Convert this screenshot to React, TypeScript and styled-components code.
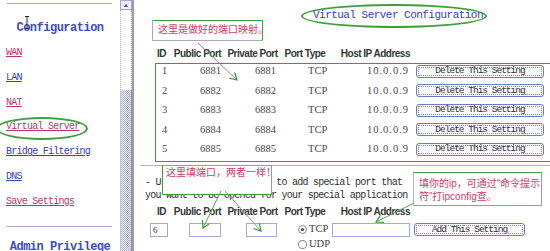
import React from 'react'
import styled, { createGlobalStyle } from 'styled-components'

const mono = `"Liberation Mono", "DejaVu Sans Mono", monospace`
const serif = `"Liberation Serif", "DejaVu Serif", serif`
const sans = `"Liberation Sans", Arial, sans-serif`
const cjk = `"Liberation Sans", "Noto Sans CJK SC", sans-serif`

const GlobalStyle = createGlobalStyle`
  html, body {
    margin: 0;
    padding: 0;
    background: #fff;
    overflow: hidden;
  }
`

const menu = [
  { label: 'WAN', visited: true },
  { label: 'LAN' },
  { label: 'NAT', visited: true },
  { label: 'Virtual Server', visited: true },
  { label: 'Bridge Filtering' },
  { label: 'DNS' },
  { label: 'Save Settings', visited: true },
]

const mappings = [1, 2, 3, 4, 5].map(i => ({
  id: i,
  publicPort: 6880 + i,
  privatePort: 6880 + i,
  type: 'TCP',
  host: '10.0.0.9',
}))

const Page = styled.div`
  position: relative;
  width: 550px;
  height: 251px;
  display: flex;
  overflow: hidden;
  background: #fff;
`

/* left frame */
const Sidebar = styled.nav`
  width: 120px;
  flex: none;
  display: flex;
  flex-direction: column;
`

const Rule = styled.div<{ $top: number; $left: number; $right: number }>`
  margin: ${p => p.$top}px ${p => p.$right}px 0 ${p => p.$left}px;
  border-top: 1px solid #a6a6c6;
`

const SideHeading = styled.div<{ $top: number }>`
  margin-top: ${p => p.$top}px;
  text-align: center;
  font: bold 12px/14px ${mono};
  letter-spacing: -0.5px;
  color: #3b4cc0;
  white-space: nowrap;
`

const Menu = styled.ul`
  list-style: none;
  margin: 12px 0 0;
  padding: 0 0 0 6px;
  display: flex;
  flex-direction: column;
  gap: 12.8px;
`

const MenuLink = styled.a<{ $visited?: boolean }>`
  display: block;
  height: 12px;
  font: 10px/12px ${mono};
  letter-spacing: -0.75px;
  color: ${p => (p.$visited ? '#b6386a' : '#3444a8')};
  text-decoration: underline;
  white-space: nowrap;
`

const Scrollbar = styled.div`
  width: 12px;
  flex: none;
  display: flex;
  flex-direction: column;
`

const ScrollArrow = styled.div`
  height: 10px;
  box-sizing: border-box;
  border: 1px solid #a8a8d8;
  background: #eeeefa;
  display: flex;
  align-items: center;
  justify-content: center;

  &::after {
    content: '';
    border-left: 2px solid transparent;
    border-right: 2px solid transparent;
    border-bottom: 3px solid #4050a0;
  }
`

const ScrollTrack = styled.div`
  height: 80px;
  border-left: 1px dotted #b4b4dc;
  border-right: 1px dotted #9c9cc8;
`

const ScrollThumb = styled.div`
  flex: 1;
  border-left: 1px solid #c4c4e8;
  border-right: 1px solid #8c8cc4;
  background: repeating-conic-gradient(#a4a4d4 0 25%, #fff 0 50%) 0 0 / 2px 2px;
`

const Divider = styled.div`
  width: 2px;
  flex: none;
  margin-right: 1px;
  background: #a49c9c;
`

/* right frame */
const Main = styled.main`
  flex: 1;
  display: flex;
  flex-direction: column;
`

const Title = styled.h1`
  margin: 0;
  height: 47px;
  box-sizing: border-box;
  padding: 9px 0 0 178px;
  font: normal 11px/12px ${mono};
  letter-spacing: -0.53px;
  color: #3040c0;
  white-space: nowrap;
`

const Grid = styled.div`
  display: grid;
  grid-template-columns: 20px 55px 55px 50px 82px 1fr;
  align-items: start;
  margin-left: 15px;
`

const HeadCell = styled.div<{ $align?: string; $pad?: string }>`
  height: 16px;
  padding: ${p => p.$pad || '0'};
  text-align: ${p => p.$align || 'center'};
  font: bold 10px/16px ${sans};
  letter-spacing: -0.5px;
  color: #363636;
  white-space: nowrap;
`

const Cell = styled.div<{ $pl?: number; $right?: boolean }>`
  height: 19.5px;
  display: flex;
  align-items: center;
  justify-content: ${p => (p.$right ? 'flex-end' : 'flex-start')};
  padding-left: ${p => p.$pl || 0}px;
  padding-right: ${p => (p.$right ? 3 : 0)}px;
  font: 10.5px/1 ${serif};
  color: #4a4a4a;
  white-space: nowrap;
`

const Address = styled.span`
  letter-spacing: 1px;
`

const SettingButton = styled.button<{ $w: number; $ml: number }>`
  width: ${p => p.$w}px;
  height: 13px;
  margin-left: ${p => p.$ml}px;
  padding: 0;
  box-sizing: border-box;
  border: 1px solid #6c7cc4;
  border-radius: 3px;
  background: #fbfbff;
  outline: 1px dotted #8a8a8a;
  outline-offset: -3px;
  font: 9.5px/10px ${mono};
  letter-spacing: -1px;
  color: #303030;
`

const SectionRule = styled.div`
  margin: 6px 0 0 5px;
  border-top: 1px solid #b0b0cc;
`

const Help = styled.p`
  margin: 9.5px 0 0;
  padding-left: 10px;
  font: 10px/13px ${mono};
  letter-spacing: -0.75px;
  color: #303030;
  white-space: pre;
`

const AddHead = styled(Grid)`
  margin-top: 3.5px;

  & > div {
    height: 14px;
    line-height: 14px;
  }
`

const AddRow = styled(Grid)`
  margin-top: 4px;
`

const Field = styled.input<{ $w: number; $ml: number }>`
  width: ${p => p.$w}px;
  height: 14px;
  margin: 0 0 0 ${p => p.$ml}px;
  padding: 0 2px;
  box-sizing: border-box;
  border: 1px solid #a6aad0;
  background: #fff;
  font: 9px/12px ${serif};
  color: #333;
  outline: none;
`

const RadioGroup = styled.div`
  display: flex;
  flex-direction: column;
  gap: 2px;
  padding-left: 18px;
`

const RadioLabel = styled.label`
  display: flex;
  align-items: center;
  height: 13px;
  gap: 2px;
  font: 10.5px/1 ${serif};
  color: #404040;
`

const RadioDot = styled.span<{ $on?: boolean }>`
  width: 9px;
  height: 9px;
  box-sizing: border-box;
  border-radius: 50%;
  border: 1px solid #8088a8;
  background: #fff;
  display: flex;
  align-items: center;
  justify-content: center;

  &::after {
    content: '';
    width: 3px;
    height: 3px;
    border-radius: 50%;
    background: ${p => (p.$on ? '#3c4a3c' : 'transparent')};
  }
`

/* annotations drawn over the screenshot */
const Ellipse = styled.div<{ $x: number; $y: number; $w: number; $h: number }>`
  position: absolute;
  left: ${p => p.$x}px;
  top: ${p => p.$y}px;
  width: ${p => p.$w}px;
  height: ${p => p.$h}px;
  box-sizing: border-box;
  border: 2px solid #3f9f3f;
  border-radius: 50%;
  pointer-events: none;
`

const Frame = styled.div`
  position: absolute;
  left: 155px;
  top: 63px;
  width: 400px;
  height: 99px;
  box-sizing: border-box;
  border: 1.5px solid #3c9c3c;
  pointer-events: none;
`

const Note = styled.div<{ $x: number; $y: number; $w: number; $h: number; $pad: string; $edges: string }>`
  position: absolute;
  left: ${p => p.$x}px;
  top: ${p => p.$y}px;
  width: ${p => p.$w}px;
  height: ${p => p.$h}px;
  box-sizing: border-box;
  padding: ${p => p.$pad};
  background: #fff;
  border: 1.5px solid;
  border-color: ${p => p.$edges};
  font: 10px/12px ${cjk};
  color: #d23c66;
  white-space: nowrap;
`

const NoteLines = styled.div`
  line-height: 13px;
`

const Overlay = styled.svg`
  position: absolute;
  left: 0;
  top: 0;
  pointer-events: none;
`

const arrows = [
  { x1: 198, y1: 43, x2: 237, y2: 80, color: '#8c8c8c' },
  { x1: 221, y1: 191, x2: 203, y2: 228, color: '#5aa65a' },
  { x1: 225, y1: 191, x2: 261, y2: 231, color: '#7f9a7f' },
  { x1: 414, y1: 203, x2: 376, y2: 222, color: '#5aa65a' },
]

const App: React.FC = () => (
  <Page>
    <GlobalStyle />
    <Sidebar>
      <Rule $top={3} $left={7} $right={8} />
      <SideHeading $top={17}>Configuration</SideHeading>
      <Menu>
        {menu.map(m => (
          <li key={m.label}>
            <MenuLink href="#" $visited={m.visited}>
              {m.label}
            </MenuLink>
          </li>
        ))}
      </Menu>
      <Rule $top={18} $left={7} $right={8} />
      <SideHeading $top={13}>Admin Privilege</SideHeading>
    </Sidebar>
    <Scrollbar>
      <ScrollArrow />
      <ScrollTrack />
      <ScrollThumb />
    </Scrollbar>
    <Divider />

    <Main>
      <Title>Virtual Server Configuration</Title>
      <Grid>
        <HeadCell $align="left" $pad="0 0 0 7px">ID</HeadCell>
        <HeadCell>Public Port</HeadCell>
        <HeadCell>Private Port</HeadCell>
        <HeadCell>Port Type</HeadCell>
        <HeadCell $align="right" $pad="0 2px 0 0">Host IP Address</HeadCell>
        <div />
        {mappings.map(m => (
          <React.Fragment key={m.id}>
            <Cell $pl={12}>{m.id}</Cell>
            <Cell $pl={30}>{m.publicPort}</Cell>
            <Cell $pl={30}>{m.privatePort}</Cell>
            <Cell $pl={28}>{m.type}</Cell>
            <Cell $right>
              <Address>{m.host}</Address>
            </Cell>
            <Cell>
              <SettingButton $w={128} $ml={4}>Delete This Setting</SettingButton>
            </Cell>
          </React.Fragment>
        ))}
      </Grid>
      <SectionRule />
      <Help>
        {'- Use this function only to add special port that\nyou want to be opened for your special application'}
      </Help>
      <AddHead>
        <HeadCell $align="left" $pad="0 0 0 7px">ID</HeadCell>
        <HeadCell>Public Port</HeadCell>
        <HeadCell>Private Port</HeadCell>
        <HeadCell>Port Type</HeadCell>
        <HeadCell $align="right" $pad="0 2px 0 0">Host IP Address</HeadCell>
        <div />
      </AddHead>
      <AddRow>
        <Field $w={18} $ml={0} defaultValue="6" />
        <Field $w={32} $ml={19} />
        <Field $w={31} $ml={21} />
        <RadioGroup>
          <RadioLabel>
            <RadioDot $on />
            TCP
          </RadioLabel>
          <RadioLabel>
            <RadioDot />
            UDP
          </RadioLabel>
        </RadioGroup>
        <Field $w={78} $ml={2} />
        <SettingButton $w={111} $ml={2}>Add This Setting</SettingButton>
      </AddRow>
    </Main>

    <Frame />
    <Ellipse $x={301} $y={4} $w={186} $h={24} />
    <Ellipse $x={-4} $y={117} $w={92} $h={23} />

    <Note $x={152} $y={20} $w={111} $h={21} $pad="3px 0 0 5px" $edges="#3f9f3f #3f9f3f #a8a8c0 #a8a8c0">
      这里是做好的端口映射。
    </Note>
    <Note $x={162} $y={165} $w={110} $h={30} $pad="1px 0 0 3px" $edges="#9a9a9a #9a9a9a #3f9f3f #3f9f3f">
      这里填端口，两者一样！
    </Note>
    <Note $x={413} $y={172} $w={129} $h={34} $pad="4px 0 0 5px" $edges="#3f9f3f #9a9a9a #8aa88a #b0b0c0">
      <NoteLines>
        填你的ip，可通过“命令提示
        <br />
        符”打ipconfig查。
      </NoteLines>
    </Note>

    <Overlay width={550} height={251}>
      <defs>
        <marker id="head" markerWidth="9" markerHeight="9" refX="7" refY="4" orient="auto" markerUnits="userSpaceOnUse">
          <path d="M0,0 L7,4 L0,8" fill="none" stroke="#3a9a3a" strokeWidth="1.2" />
        </marker>
      </defs>
      {arrows.map((a, i) => (
        <line key={i} x1={a.x1} y1={a.y1} x2={a.x2} y2={a.y2} stroke={a.color} strokeWidth="1" markerEnd="url(#head)" />
      ))}
      <path d="M25 16.5h4M27 16.5v12M25 28.5h4" stroke="#2a2a2a" strokeWidth="1" fill="none" />
    </Overlay>
  </Page>
)

export default App
